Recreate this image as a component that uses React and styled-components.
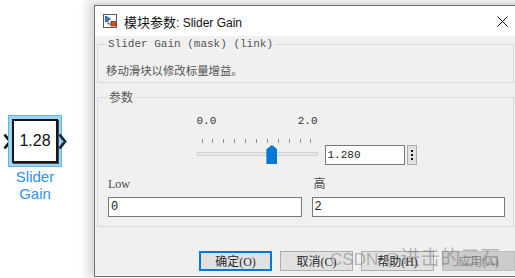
import React from 'react';
import styled, { createGlobalStyle } from 'styled-components';

const GlobalStyle = createGlobalStyle`
  html, body {
    margin: 0;
    padding: 0;
    background: #ffffff;
    overflow: hidden;
  }
  * { box-sizing: border-box; }
`;

const CJK = `"Noto Sans CJK SC", sans-serif`;
const MONO = `"Liberation Mono", "Noto Sans CJK SC", monospace`;
const SERIF = `"Liberation Serif", "Noto Sans CJK SC", serif`;

const sliderMin = 0;
const sliderMax = 2;
const sliderValue = 1.28;

const App = () => {
  const ratio = (sliderValue - sliderMin) / (sliderMax - sliderMin);

  return (
    <Page>
      <GlobalStyle />

      <Canvas>
        <Block>
          <BlockRow>
            <Port viewBox="0 0 9 17" $side="in">
              <path d="M1.5 1.5 L7 8.5 L1.5 15.5" />
            </Port>
            <Highlight>
              <GainBox>1.28</GainBox>
            </Highlight>
            <Port viewBox="0 0 9 17" $side="out">
              <path d="M1.5 1.5 L7 8.5 L1.5 15.5" />
            </Port>
          </BlockRow>
          <BlockName>
            Slider
            <br />
            Gain
          </BlockName>
        </Block>
      </Canvas>

      <Dialog>
        <BehindEdge />
        <Frame>
          <TitleBar>
            <TitleIcon viewBox="0 0 14 14">
              <rect x="0.5" y="0.5" width="13" height="13" fill="#fff" stroke="#5a5a5a" />
              <path d="M2.5 2 L2.5 8 L7.5 5 Z" fill="#2f80d8" stroke="#1b4f8c" strokeWidth="0.8" />
              <path d="M5 6.5 L5 10 L8 10" fill="none" stroke="#333" strokeWidth="0.8" />
              <rect x="8" y="7.5" width="4.5" height="4.5" fill="#e2531f" stroke="#8a2b05" strokeWidth="0.8" />
            </TitleIcon>
            <TitleText>
              <CjkPart>模块参数</CjkPart>: Slider Gain
            </TitleText>
            <CloseButton>
              <svg width="11" height="11" viewBox="0 0 11 11">
                <path d="M0.5 0.5 L10.5 10.5 M10.5 0.5 L0.5 10.5" stroke="#111" strokeWidth="1" />
              </svg>
            </CloseButton>
          </TitleBar>

          <Body>
            <Group $padLeft={8} $padTop={11} $padBottom={4}>
              <Legend $mono>Slider Gain (mask) (link)</Legend>
              <Description>移动滑块以修改标量增益。</Description>
            </Group>

            <Group $padLeft={10} $padTop={10} $padBottom={9} $gapTop={6}>
              <Legend>参数</Legend>

              <SliderRow>
                <SliderBlock>
                  <ScaleLabels>
                    <span>0.0</span>
                    <span>2.0</span>
                  </ScaleLabels>
                  <Ticks>
                    {Array.from({ length: 11 }).map((_, i) => (
                      <Tick key={i} />
                    ))}
                  </Ticks>
                  <TrackArea>
                    <Rail />
                    <Thumb style={{ left: `${ratio * 110 - 0.5}px` }} />
                  </TrackArea>
                </SliderBlock>
                <ValueField>1.280</ValueField>
                <MenuButton>
                  <svg width="4" height="14" viewBox="0 0 4 14">
                    <rect x="1" y="2" width="2" height="2" fill="#111" />
                    <rect x="1" y="6" width="2" height="2" fill="#111" />
                    <rect x="1" y="10" width="2" height="2" fill="#111" />
                  </svg>
                </MenuButton>
              </SliderRow>

              <Fields>
                <Field>
                  <FieldLabel>Low</FieldLabel>
                  <TextBox>0</TextBox>
                </Field>
                <Field>
                  <FieldLabel $indent={2}>高</FieldLabel>
                  <TextBox>2</TextBox>
                </Field>
              </Fields>
            </Group>

            <Buttons>
              <Button $variant="primary">确定(O)</Button>
              <Button>取消(C)</Button>
              <Button>帮助(H)</Button>
              <Button $variant="disabled">应用(A)</Button>
            </Buttons>
          </Body>
        </Frame>
      </Dialog>

      <Watermark>
        <WatermarkLatin>CSDN @</WatermarkLatin>进击的三石
      </Watermark>
    </Page>
  );
};

export default App;

const Page = styled.div`
  position: relative;
  display: flex;
  width: 515px;
  height: 278px;
  overflow: hidden;
  background: #ffffff;
`;

const Canvas = styled.div`
  width: 94px;
  flex-shrink: 0;
  padding: 115px 0 0 3px;
  background: #ffffff;
`;

const Block = styled.div`
  display: inline-flex;
  flex-direction: column;
  align-items: center;
`;

const BlockRow = styled.div`
  display: flex;
  align-items: center;
`;

const Port = styled.svg`
  width: 9px;
  height: 17px;
  margin-right: ${(p) => (p.$side === 'in' ? '-4px' : '0')};
  margin-left: ${(p) => (p.$side === 'out' ? '-4px' : '0')};

  path {
    fill: none;
    stroke: ${(p) => (p.$side === 'in' ? '#111' : '#0d2a44')};
    stroke-width: 2.8;
    stroke-linejoin: miter;
  }
`;

const Highlight = styled.div`
  width: 54px;
  height: 52px;
  padding: 3px;
  border: 1px solid #62b6ee;
  background: #9fd4f6;
`;

const GainBox = styled.div`
  width: 100%;
  height: 100%;
  display: flex;
  align-items: center;
  justify-content: center;
  background: #ffffff;
  border: 2px solid #161616;
  box-shadow: 1px 1px 0 #4a4a4a;
  font-family: "Liberation Sans", Arial, sans-serif;
  font-size: 16px;
  color: #111;
`;

const BlockName = styled.div`
  margin-top: 1px;
  font-family: "Liberation Sans", Arial, sans-serif;
  font-size: 15px;
  line-height: 17px;
  color: #2a92f0;
  text-align: center;
`;

const Dialog = styled.div`
  width: 431px;
  flex-shrink: 0;
  display: flex;
  flex-direction: column;
  box-shadow: -6px 0 10px rgba(0, 0, 0, 0.16);
`;

const BehindEdge = styled.div`
  height: 5px;
  background: linear-gradient(#f3f3f3, #d6d6d6);
`;

const Frame = styled.div`
  height: 272px;
  display: flex;
  flex-direction: column;
  border: 1px solid #6f6f6f;
  border-right: none;
  background: #f0f0f0;
`;

const TitleBar = styled.div`
  height: 30px;
  flex-shrink: 0;
  display: flex;
  align-items: center;
  padding-left: 8px;
  background: #ffffff;
`;

const TitleIcon = styled.svg`
  width: 14px;
  height: 14px;
  flex-shrink: 0;
`;

const TitleText = styled.div`
  flex: 1;
  margin-left: 7px;
  font-family: "Liberation Sans", "Noto Sans CJK SC", sans-serif;
  font-size: 12px;
  color: #111;
  white-space: nowrap;
`;

const CjkPart = styled.span`
  font-family: ${CJK};
  font-size: 13px;
`;

const CloseButton = styled.div`
  width: 44px;
  height: 30px;
  display: flex;
  align-items: center;
  justify-content: center;
  margin-right: 1px;
`;

const Body = styled.div`
  flex: 1;
  display: flex;
  flex-direction: column;
  padding-top: 2px;
`;

const Group = styled.fieldset`
  width: 417px;
  margin: ${(p) => p.$gapTop || 0}px 0 0 2px;
  padding: ${(p) => p.$padTop}px 8px ${(p) => p.$padBottom}px ${(p) => p.$padLeft}px;
  border: 1px solid #dadada;
  min-width: 0;
`;

const Legend = styled.legend`
  padding: 0 ${(p) => (p.$mono ? 2 : 1)}px;
  font-family: ${(p) => (p.$mono ? MONO : CJK)};
  font-size: ${(p) => (p.$mono ? 11 : 12)}px;
  line-height: ${(p) => (p.$mono ? 13 : 16)}px;
  color: #555;
`;

const Description = styled.div`
  font-family: ${CJK};
  font-size: 11.4px;
  line-height: 16px;
  color: #555;
`;

const SliderRow = styled.div`
  display: flex;
  align-items: flex-end;
  justify-content: center;
`;

const SliderBlock = styled.div`
  width: 121px;
  display: flex;
  flex-direction: column;
`;

const ScaleLabels = styled.div`
  display: flex;
  justify-content: space-between;
  font-family: ${MONO};
  font-size: 11px;
  line-height: 13px;
  color: #333;
`;

const Ticks = styled.div`
  height: 4px;
  margin-top: 11px;
  padding: 0 6px 0 5px;
  display: flex;
  justify-content: space-between;
`;

const Tick = styled.span`
  width: 1px;
  height: 4px;
  background: #8d8d8d;
`;

const TrackArea = styled.div`
  position: relative;
  height: 22px;
  padding-top: 9px;
`;

const Rail = styled.div`
  height: 4px;
  border: 1px solid #d3d3d3;
  background: #e8e8e8;
`;

const Thumb = styled.div`
  position: absolute;
  top: 2px;
  width: 11px;
  height: 19px;
  background: #0078d7;
  clip-path: polygon(50% 0, 100% 22%, 100% 100%, 0 100%, 0 22%);
`;

const ValueField = styled.div`
  width: 80px;
  height: 20px;
  margin-left: 7px;
  padding-left: 2px;
  display: flex;
  align-items: center;
  background: #ffffff;
  border: 1px solid #7a7a7a;
  font-family: ${MONO};
  font-size: 11px;
  color: #222;
`;

const MenuButton = styled.div`
  width: 10px;
  height: 20px;
  margin-left: 2px;
  display: flex;
  align-items: center;
  justify-content: center;
  background: #e1e1e1;
  border: 1px solid #adadad;
`;

const Fields = styled.div`
  display: grid;
  grid-template-columns: 1fr 1fr;
  column-gap: 10px;
  margin-top: 12px;
`;

const Field = styled.div`
  display: flex;
  flex-direction: column;
`;

const FieldLabel = styled.div`
  padding-left: ${(p) => p.$indent || 0}px;
  margin-bottom: 5px;
  font-family: ${SERIF};
  font-size: 12px;
  line-height: 15px;
  color: #4a4a4a;
`;

const TextBox = styled.div`
  height: 20px;
  padding-left: 2px;
  display: flex;
  align-items: center;
  background: #ffffff;
  border: 1px solid #7a7a7a;
  font-family: ${MONO};
  font-size: 12px;
  color: #222;
`;

const Buttons = styled.div`
  display: flex;
  justify-content: flex-end;
  gap: 8px;
  margin-top: 24px;
  padding-right: 10px;
`;

const Button = styled.div`
  width: 73px;
  height: 20px;
  display: flex;
  align-items: center;
  justify-content: center;
  font-family: ${SERIF};
  font-size: 12px;
  color: ${(p) => (p.$variant === 'disabled' ? '#8a8a8a' : '#2b2b2b')};
  background: ${(p) => (p.$variant === 'disabled' ? '#cccccc' : '#e1e1e1')};
  border: ${(p) =>
    p.$variant === 'primary'
      ? '2px solid #0078d7'
      : p.$variant === 'disabled'
      ? '1px solid #bfbfbf'
      : '1px solid #adadad'};
`;

const Watermark = styled.div`
  position: absolute;
  left: 330px;
  top: 243px;
  font-family: ${CJK};
  font-size: 20px;
  line-height: 28px;
  color: rgba(95, 95, 95, 0.42);
  white-space: nowrap;
  pointer-events: none;
`;

const WatermarkLatin = styled.span`
  font-family: "Liberation Sans", sans-serif;
  font-size: 17px;
`;
